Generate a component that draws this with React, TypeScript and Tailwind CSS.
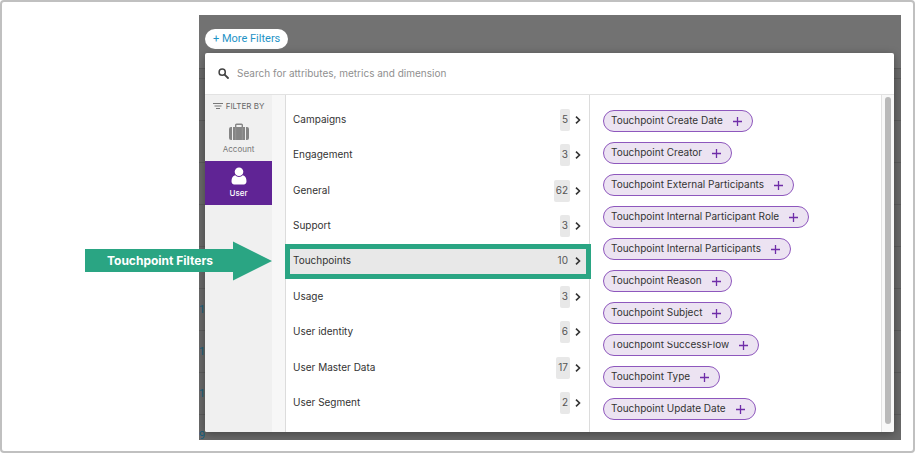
import React, { useState } from "react";

interface Category {
  name: string;
  count: number;
}

interface Attribute {
  name: string;
  clipped?: boolean;
}

const categories: Category[] = [
  { name: "Campaigns", count: 5 },
  { name: "Engagement", count: 3 },
  { name: "General", count: 62 },
  { name: "Support", count: 3 },
  { name: "Touchpoints", count: 10 },
  { name: "Usage", count: 3 },
  { name: "User identity", count: 6 },
  { name: "User Master Data", count: 17 },
  { name: "User Segment", count: 2 },
];

const attributes: Attribute[] = [
  { name: "Touchpoint Create Date" },
  { name: "Touchpoint Creator" },
  { name: "Touchpoint External Participants" },
  { name: "Touchpoint Internal Participant Role" },
  { name: "Touchpoint Internal Participants" },
  { name: "Touchpoint Reason" },
  { name: "Touchpoint Subject" },
  { name: "Touchpoint SuccessFlow", clipped: true },
  { name: "Touchpoint Type" },
  { name: "Touchpoint Update Date" },
];

const tableCells = ["", "", "", "", "", "16", "17", "11", "9"];

const SearchIcon = () => (
  <svg width="11" height="11" viewBox="0 0 11 11" fill="none" stroke="#444" aria-hidden="true">
    <circle cx="4.2" cy="4.2" r="3.1" strokeWidth="1.5" />
    <path d="M6.6 6.6L10 10" strokeWidth="1.8" strokeLinecap="round" />
  </svg>
);

const FilterIcon = () => (
  <svg width="10" height="8" viewBox="0 0 10 8" stroke="#777" strokeWidth="1" aria-hidden="true">
    <path d="M0 1.5h10M1.5 4h7M3 6.5h4" />
  </svg>
);

const SuitcaseIcon = () => (
  <svg width="20" height="18" viewBox="0 0 20 18" fill="#858585" aria-hidden="true">
    <path d="M3 4v13H2a2 2 0 0 1-2-2V6a2 2 0 0 1 2-2zM17 4v13h1a2 2 0 0 0 2-2V6a2 2 0 0 0-2-2z" />
    <path d="M4 17V4h2V2a1.6 1.6 0 0 1 1.6-1.6h4.8A1.6 1.6 0 0 1 14 2v2h2v13zM7.4 4h5.2V1.9H7.4z" />
    <path d="M6.7 4.5v12.5M13.3 4.5v12.5" stroke="#a5a5a5" strokeWidth=".5" />
  </svg>
);

const UserIcon = () => (
  <svg width="16" height="18" viewBox="0 0 16 18" fill="#fff" aria-hidden="true">
    <circle cx="8" cy="4.7" r="4.3" />
    <path d="M4.2 8.2A5.4 5.4 0 0 0 8 9.9a5.4 5.4 0 0 0 3.8-1.7C14.3 8.7 15.5 11 15.5 14.2c0 1.9-1 3.2-2.7 3.2H3.2C1.5 17.4.5 16.1.5 14.2.5 11 1.7 8.7 4.2 8.2z" />
  </svg>
);

const ChevronIcon = () => (
  <svg width="6" height="8" viewBox="0 0 6 8" fill="none" stroke="#333" strokeWidth="1.6" aria-hidden="true">
    <path d="M1 .7L4.5 4L1 7.3" />
  </svg>
);

const PlusIcon = () => (
  <svg width="9" height="9" viewBox="0 0 9 9" stroke="#6f2da8" strokeWidth="1.3" aria-hidden="true">
    <path d="M4.5 0v9M0 4.5h9" />
  </svg>
);

const App: React.FC = () => {
  const [active, setActive] = useState("Touchpoints");
  const [query, setQuery] = useState("");

  return (
    <div className="relative rounded-sm border-2 border-[#c0c0c0] bg-white pt-[13px] pb-[11px] font-[Inter,sans-serif] text-[10px] leading-4 text-[#333]">
      <div className="relative ml-[197px] mr-3 overflow-hidden bg-[#727272] px-[6px] pt-[14px] pb-2">
        {/* Dimmed table behind the panel */}
        <div className="absolute inset-0 flex flex-col pt-[53px]" aria-hidden="true">
          <div className="flex-1 border-t border-[#5c5c5c] bg-[#696969] pt-[9px]">
            {tableCells.map((cell, index) => (
              <div key={index} className="flex h-[42px] items-center border-t border-[#5c5c5c] font-[Roboto,sans-serif] text-[11px] text-[#17607f]">
                {cell}
              </div>
            ))}
          </div>
        </div>

        <div className="relative">
          <button className="flex h-5 items-center rounded-full bg-white px-2 pb-px font-[Roboto,sans-serif] text-[11px] text-[#1f93c6]">
            + More Filters
          </button>

          <div className="mt-1 mr-px overflow-hidden rounded-xs bg-white shadow-[0_2px_8px_rgba(0,0,0,0.35)]">
            <label className="flex h-[42px] items-center gap-2 border-b border-[#e2e2e2] px-[13px]">
              <SearchIcon />
              <input
                type="text"
                value={query}
                onChange={(e) => setQuery(e.target.value)}
                placeholder="Search for attributes, metrics and dimension"
                aria-label="Search for attributes, metrics and dimension"
                className="min-w-0 flex-1 bg-transparent pb-[2px] outline-none placeholder:text-[#8f8f8f]"
              />
            </label>

            <div className="flex">
              <nav className="w-[67px] shrink-0 bg-[#f0f0f0] text-center text-[8px]">
                <div className="flex h-[22px] items-center justify-center gap-[3px] text-[#666]">
                  <FilterIcon />
                  FILTER BY
                </div>
                <button className="flex h-11 w-full flex-col items-center justify-center pt-px text-[#777]">
                  <SuitcaseIcon />
                  Account
                </button>
                <button className="flex h-11 w-full flex-col items-center justify-center bg-[#602495] pt-px font-medium text-white">
                  <UserIcon />
                  User
                </button>
              </nav>
              <div className="w-[14px] shrink-0 border-r border-[#dcdcdc] bg-[#f7f7f7]" />

              <ul className="relative flex w-[303px] shrink-0 flex-col pt-[7px] pb-[11px]">
                {categories.map((category) => (
                  <li key={category.name} className="flex flex-1">
                    <button
                      onClick={() => setActive(category.name)}
                      className={`flex flex-1 items-center justify-between ${
                        active === category.name
                          ? "-ml-px -mr-[2px] border-[5px] border-[#2aa583] bg-[#e8e8e8] pl-[3px] pr-[5px]"
                          : "pl-[7px] pr-2"
                      }`}
                    >
                      <span className="pb-[2px]">{category.name}</span>
                      <span className="flex items-center gap-[5px]">
                        <span className="flex h-[22px] items-center rounded-xs bg-[#e8e8e8] px-[2px] pb-[2px] text-[#555]">
                          {category.count}
                        </span>
                        <ChevronIcon />
                      </span>
                    </button>
                  </li>
                ))}
              </ul>

              <div className="flex min-w-0 flex-1 flex-col items-start gap-[10px] border-l border-[#dcdcdc] pt-[15px] pb-3 pl-[13px]">
                {attributes.map((attribute) => (
                  <button
                    key={attribute.name}
                    className="flex h-[22px] items-center gap-[10px] rounded-full border border-[#8e57bd] bg-[#ece3f2] pl-[7px] pr-[10px] whitespace-nowrap"
                  >
                    <span className={attribute.clipped ? "pb-[3px] [clip-path:inset(6px_0_0_0)]" : "pb-[3px]"}>
                      {attribute.name}
                    </span>
                    <PlusIcon />
                  </button>
                ))}
              </div>

              <div className="flex w-[13px] shrink-0 border-l border-[#e2e2e2] bg-[#f8f8f8] px-[3px] pt-[2px] pb-2">
                <div className="flex-1 rounded-full bg-[#b9b9b9]" />
              </div>
            </div>
          </div>
        </div>
      </div>

      {/* Callout arrow */}
      <div className="absolute left-[83px] top-[239px] h-10 w-[187px]">
        <svg className="absolute inset-0" width="187" height="40" viewBox="0 0 187 40" fill="#2aa583" aria-hidden="true">
          <path d="M0 8h148V0.5L187 20L148 39.5V31H0z" />
        </svg>
        <p className="relative flex h-10 w-[150px] items-center justify-center text-[12px] font-bold text-white">
          Touchpoint Filters
        </p>
      </div>
    </div>
  );
};

export default App;
